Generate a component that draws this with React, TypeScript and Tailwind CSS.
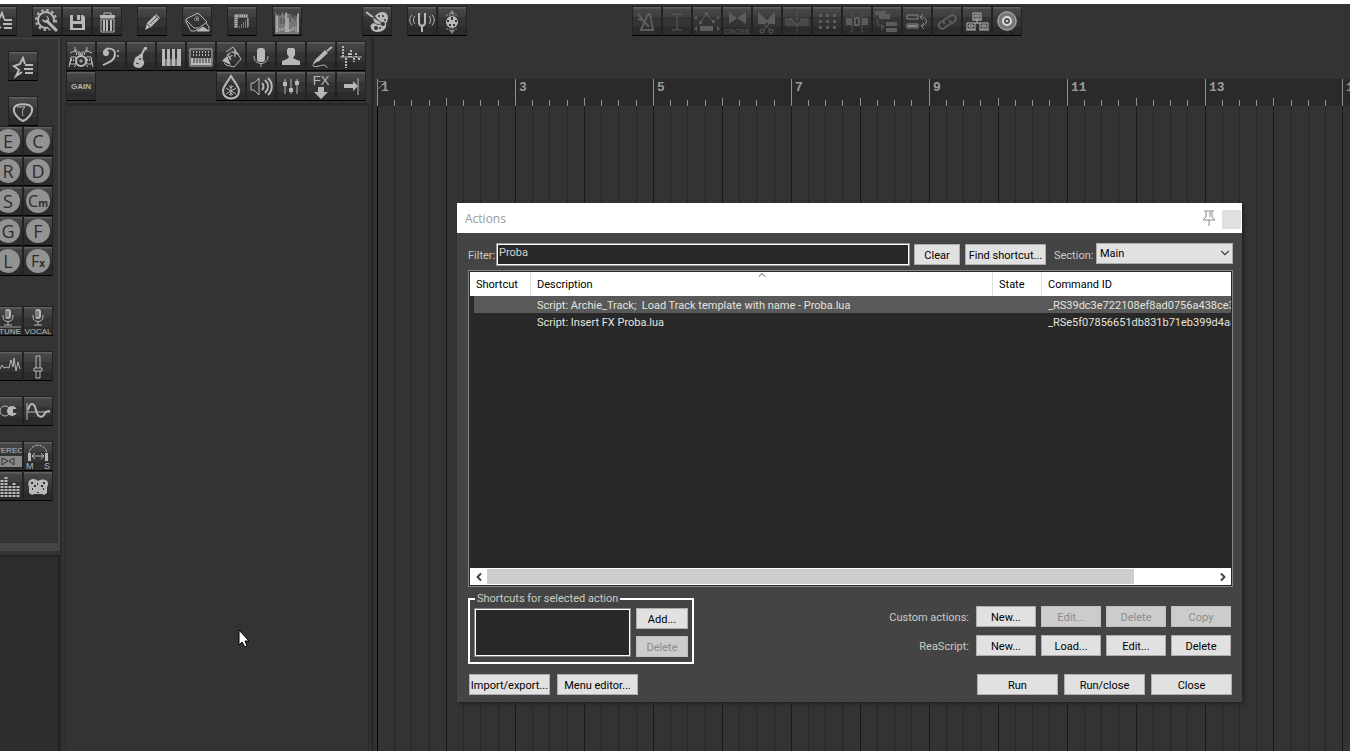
import { ReactNode, useEffect, useState } from 'react';
import { ChevronDown, ChevronLeft, ChevronRight, ChevronUp } from 'lucide-react';

const line = { fill: 'none', stroke: 'currentColor', strokeWidth: 2 };
const thin = { fill: 'none', stroke: 'currentColor', strokeWidth: 1 };

const Mic = () => (
  <g>
    <rect x="12" y="3" width="6" height="10" rx="3" fill="currentColor" />
    <path d="M12 6h4M12 8h4M12 10h4" stroke="#444" />
    <path d="M10 9v2c0 6 10 6 10 0V9M15 15v4M11 19h8" {...thin} />
  </g>
);

// All icons are drawn on the 30x30 toolbar tile
const ICONS: Record<string, ReactNode> = {
  starList: (
    <g {...line}>
      <path d="M17 13l-2-6-3 6-6 2 5 4-3 6 6-4M17 14h8M16 18h9M17 22h8" />
    </g>
  ),
  settings: (
    <g>
      <circle cx="14" cy="14" r="10" {...line} strokeDasharray="2.6 2.63" />
      <circle cx="14" cy="14" r="8" {...line} />
      <path d="M15 15l10 10" stroke="#333" strokeWidth="7" />
      <path d="M15 15l9 9" stroke="currentColor" strokeWidth="3" strokeLinecap="round" />
      <path d="M10 13c0 3 4 5 6 3s1-6-2-6l2 3-2 2z" fill="currentColor" />
    </g>
  ),
  save: (
    <path
      d="M8 9h3v6h8V9h2l2 2v13H8zM15 9h3v5h-3zM11 18v4h9v-4z"
      fill="currentColor"
      fillRule="evenodd"
    />
  ),
  trash: (
    <g>
      <path d="M12 9V7h7v2" {...thin} />
      <path d="M8 9h15v3H8z" fill="currentColor" />
      <path d="M9 13h13v13H9z" {...thin} />
      <path d="M12 14v11M15 14v11M19 14v11" {...line} />
    </g>
  ),
  pencil: (
    <g>
      <path d="M8 24l2-7L19 8l4 4-9 9z" fill="currentColor" />
      <path d="M10 18l3 3M13 18l7-7M18 9l4 4" stroke="#555" strokeWidth="1" />
    </g>
  ),
  book: (
    <g {...thin}>
      <path d="M4 13L16 7l9 9-12 9H9L4 16zM4 14l8 8h4" />
      <path d="M15 10v6M12 13h6M13 11l4 4M17 11l-4 4" strokeDasharray="1 1" />
      <path d="M15 25l6-4 6 4z" fill="currentColor" />
      <path d="M24 17l3 4v4" />
    </g>
  ),
  ruler: (
    <g>
      <path d="M9 22V10h12" {...line} strokeWidth="3" />
      <path d="M9 11v12M10 10h12" stroke="#333" strokeDasharray="1 1" />
      <path d="M12 21h10M14 19h8M16 17h6M18 15h4M20 13h2" stroke="currentColor" strokeDasharray="1 1" />
      <path d="M21 12v9" stroke="currentColor" />
    </g>
  ),
  texture: (
    <g>
      <path d="M3 28V5l2 4 2-1 1 3 2-5 3 4 1-5 2 3h3l2 5 1-4 3 2 2-6v23z" fill="#777" />
      <path d="M5 10v16M14 7v19M16 12v14M26 8v18" stroke="#a5a5a5" strokeWidth="2" />
      <path d="M9 12v6M18 9v7M12 12v6M23 10v5" stroke="#4a4a4a" />
      <path d="M4 21l5 3 4-3 5 4 4-4 5 3M4 26l6-3 5 3 6-3 6 3" {...thin} strokeDasharray="2 1" />
    </g>
  ),
  palette: (
    <g>
      <path d="M13 10c5-6 13-5 13 2 0 3-2 4-2 6 2 6-9 11-14 6-3-4-1-7 3-7 6 0 2-4 0-7z" fill="currentColor" />
      <g fill="#333">
        <circle cx="17" cy="10" r="1" />
        <circle cx="21" cy="10" r="1" />
        <circle cx="23" cy="14" r="1" />
        <circle cx="21" cy="18" r="2" />
        <circle cx="18" cy="22" r="1" />
        <circle cx="14" cy="22" r="2" />
      </g>
      <path d="M4 6l8 6" {...line} />
      <path d="M11 11l9 6c-3 3-8 1-9-3z" fill="currentColor" stroke="#444" />
    </g>
  ),
  tuning: (
    <g {...line}>
      <path d="M12 7v9c0 5 6 5 6 0V7M15 20v6" />
      <path d="M8 10c-2 2-2 6 0 8M22 10c2 2 2 6 0 8M5 9c-3 3-3 7 0 10M25 9c3 3 3 7 0 10" strokeWidth="1" />
    </g>
  ),
  paletteMove: (
    <g>
      <path d="M15 4l3 4h-6zM15 28l3-4h-6z" fill="#888" />
      <path d="M9 9h12M9 23h12" stroke="#a08888" strokeDasharray="2 1" />
      <circle cx="15" cy="16" r="6" fill="currentColor" />
      <path d="M14 11h2v3h-2zM10 14h2v2h-2zM18 14h2v2h-2zM12 18h2v2h-2zM16 18h2v2h-2z" fill="#333" />
    </g>
  ),
  metronome: (
    <g {...line}>
      <path d="M8 24h13L18 8h-2L9 24M6 8l11 13M6 13l4 1" />
    </g>
  ),
  ibeam: (
    <path d="M10 8h4l1 1 1-1h4M15 9v14M10 24h4l1-1 1 1h4" {...thin} />
  ),
  envelope: (
    <g>
      <path d="M8 17l6-9 8 9" {...thin} />
      <path d="M7 15h3v3H7zM13 6h3v3h-3zM20 14h3v3h-3zM8 20h13v5H8zM5 9v5l-3-2zM25 9v5l3-2zM5 20v5l-3-2zM25 20v5l3-2z" fill="currentColor" />
    </g>
  ),
  cross: (
    <g>
      <path d="M7 6l8 6 9-6v12l-9-6-8 6z" fill="currentColor" />
      <text x="15" y="28" textAnchor="middle" fontSize="7" fill="currentColor">CROSS</text>
    </g>
  ),
  cut: (
    <g>
      <path d="M6 6l9 8 8-8v12h-7l-1-2-2 2H6z" fill="currentColor" />
      <path d="M10 16l8 8M19 16l-8 8" {...thin} />
      <circle cx="10" cy="25" r="2" {...thin} />
      <circle cx="19" cy="25" r="2" {...thin} />
    </g>
  ),
  split: (
    <g>
      <path d="M3 13h6l6 6 6-6h6v7H3z" fill="currentColor" opacity="0.5" />
      <path d="M8 12l7 7 7-7" {...thin} />
      <path d="M15 5v22M3 13h24" {...thin} strokeDasharray="2 1" />
    </g>
  ),
  dots: (
    <path
      d="M7 8h3v3H7zM14 8h3v3h-3zM21 8h3v3h-3zM7 14h3v3H7zM14 14h3v3h-3zM21 14h3v3h-3zM7 20h3v3H7zM14 20h3v3h-3zM21 20h3v3h-3z"
      fill="currentColor"
    />
  ),
  snap: (
    <g>
      <path d="M4 12h6v7H4zM20 12h6v7h-6z" fill="currentColor" />
      <path d="M13 12h4v7h-4z" {...line} />
      <path d="M10 6v20M20 6v20" {...thin} strokeDasharray="2 1" />
    </g>
  ),
  cascade: (
    <g>
      <path d="M3 5h11v4H3zM7 8h11v5H7zM14 16h11v4H14zM14 22h11v4H14z" fill="currentColor" />
      <path d="M5 13c0 5 2 8 6 8M9 18l3 3-3 3" {...thin} />
    </g>
  ),
  swap: (
    <g className="text-[#888]">
      <path d="M5 9h11v4H5zM5 18h11v4H5z" {...thin} />
      <path d="M6 19h9v2H6z" fill="currentColor" />
      <path d="M18 11c7-1 9 7 2 9M21 8l-3 3 3 3M22 17l-3 3 3 3" {...thin} />
    </g>
  ),
  link: (
    <path d="M13 18c-3-2-1-5 2-6l5-3c4 0 5 5 2 7l-3 2M17 14c3 2 1 5-2 6l-4 3c-4 0-6-5-2-7l3-2" {...line} />
  ),
  tree: (
    <g {...thin}>
      <path d="M11 7h8v6h-8zM5 17h8v6H5zM18 17h8v6h-8zM15 13v4h-2M15 17h3" />
      <path d="M13 9h4v2h-4zM7 19h4v2H7zM20 19h4v2h-4zM4 24h10M17 24h10M10 14h10" />
    </g>
  ),
  record: (
    <g shapeRendering="auto">
      <circle cx="15" cy="15" r="10" fill="#777" />
      <circle cx="15" cy="15" r="9" {...thin} stroke="#aaa" />
      <circle cx="15" cy="15" r="4" fill="#555" stroke="#ddd" strokeWidth="2" />
      <circle cx="15" cy="15" r="1" fill="#eee" />
      <path d="M9 27h3M19 27h3" stroke="#222" strokeWidth="2" />
    </g>
  ),
  drums: (
    <g {...thin}>
      <circle cx="15" cy="20" r="5" strokeWidth="2" />
      <path d="M15 18v4M13 20h4M5 16h5v7H4zM20 16h5l1 7h-5z" />
      <path d="M4 12l7-3M19 9l7 3M9 6v5M21 6v5M9 11h5v4M21 11h-5v4M3 26l2-9M27 26l-2-9M8 26l2-2M22 26l-2-2" />
      <path d="M5 19h4M21 19h4M10 13h10" strokeWidth="2" strokeDasharray="1 1" />
    </g>
  ),
  bass: (
    <g>
      <path d="M8 12c0-6 11-6 11 1 0 6-5 8-12 11" {...line} />
      <circle cx="10" cy="12" r="3" fill="currentColor" />
      <circle cx="22" cy="10" r="1" fill="currentColor" />
      <circle cx="22" cy="15" r="1" fill="currentColor" />
    </g>
  ),
  guitar: (
    <g>
      <path d="M9 17c1-2 3-1 4-3s4-1 4 1-1 3 0 4c3 2 0 8-4 8s-7-3-5-6z" fill="currentColor" />
      <path d="M14 17l5-10" {...line} />
      <path d="M18 6h3v3h-2z" fill="currentColor" />
      <circle cx="14" cy="18" r="1" fill="#333" />
      <path d="M10 22l3 1" stroke="#333" />
    </g>
  ),
  piano: (
    <g>
      <path d="M6 8h19v17H6z" fill="currentColor" />
      <path d="M10 8v10M15 8v10M20 8v10" stroke="#333" strokeWidth="2" />
      <path d="M10 18v7M15 18v7M20 18v7" stroke="#333" />
    </g>
  ),
  organ: (
    <g>
      <path d="M4 8h22v17H4z" {...thin} />
      <path d="M7 11h16M7 14h16" stroke="currentColor" strokeWidth="2" strokeDasharray="1 2" />
      <path d="M5 17h20v7H5z" fill="currentColor" />
      <path d="M8 17v5M11 17v5M14 17v5M17 17v5M20 17v5M23 17v5" stroke="#333" />
    </g>
  ),
  fxCard: (
    <g>
      <path d="M10 11l7-5 8 12-7 8-8-2-2-2" {...thin} />
      <path d="M6 20l5-5 4 9z" fill="currentColor" />
      <text x="12" y="18" fontSize="9" fontWeight="bold" transform="rotate(-35 15 16)" fill="currentColor">FX</text>
    </g>
  ),
  mic: (
    <g shapeRendering="auto">
      <rect x="11" y="7" width="8" height="14" rx="3" fill="currentColor" />
      <path d="M8 15c0 10 14 10 14 0M15 22v4" {...thin} />
    </g>
  ),
  person: (
    <path d="M12 7h6l1 2v5l-2 3 4 2 3 1v4H6v-4l5-2 2-2-2-3V9z" fill="currentColor" />
  ),
  jack: (
    <g>
      <path d="M9 19L19 9l3 3-10 9z" fill="currentColor" />
      <path d="M21 10l5-4M11 19l-3 3" {...line} />
      <path d="M8 22c-3 4 1 4 5 3s7-2 8 2" {...thin} />
    </g>
  ),
  wave: (
    <g {...thin}>
      <path d="M4 16h22" />
      <path d="M7 5v11M10 17v10M13 12v4M15 9v7M18 17v4M20 12v4M23 17v2" strokeWidth="2" strokeDasharray="2 1" />
    </g>
  ),
  gain: (
    <text x="15" y="18" textAnchor="middle" fontSize="8" fontWeight="bold" fill="currentColor">GAIN</text>
  ),
  drop: (
    <g>
      <path d="M15 5c-4 7-8 10-8 15 0 10 16 10 16 0 0-5-4-8-8-15z" {...line} />
      <path d="M15 14v11M10 17l10 6M20 17l-10 6M13 15l2 2 2-2M13 24l2-2 2 2" {...thin} />
    </g>
  ),
  speaker: (
    <g {...line}>
      <path d="M5 12h3l5-5v17l-5-5H5z" strokeWidth="1" />
      <path d="M16 12c2 2 2 5 0 7M19 9c4 4 4 9 0 13M22 7c5 5 5 12 0 17" />
    </g>
  ),
  sliders: (
    <g>
      <path d="M9 8v15M15 8v15M21 8v15" {...thin} />
      <path d="M7 11h4v4H7zM13 17h4v4h-4zM19 10h4v4h-4z" fill="currentColor" />
    </g>
  ),
  fxDown: (
    <g fill="currentColor">
      <text x="15" y="14" textAnchor="middle" fontSize="13">FX</text>
      <path d="M12 16h6v5h4l-7 7-7-7h4z" />
    </g>
  ),
  arrowEnd: (
    <g>
      <path d="M8 13h9v-3l5 5-5 5v-3H8z" fill="currentColor" />
      <path d="M22 7v17" {...thin} />
    </g>
  ),
  pick: (
    <g {...line}>
      <path d="M6 12c2-5 16-5 18 0 1 5-4 11-9 13-5-2-10-8-9-13z" />
      <path d="M9 11h8c-3 3-3 5-2 9" strokeWidth="1" />
    </g>
  ),
  tune: (
    <g>
      <Mic />
      <path d="M3 21h25" stroke="#999" />
      <text x="17" y="28" textAnchor="middle" fontSize="8" fontWeight="bold" fill="#999">TUNE</text>
    </g>
  ),
  vocal: (
    <g>
      <Mic />
      <text x="15" y="28" textAnchor="middle" fontSize="8" fill="currentColor">VOCAL</text>
    </g>
  ),
  signal: (
    <path d="M3 20l4-2 2-4 2 3 3-1 2 1 2-8 2 7 1-9 2 13 2-9 2 7" {...thin} />
  ),
  fader: (
    <g {...thin}>
      <path d="M13 5h4v22h-4z" />
      <path d="M11 17h8v3h-8z" fill="#333" />
    </g>
  ),
  circles: (
    <g shapeRendering="auto">
      <circle cx="12" cy="15" r="5" {...thin} />
      <circle cx="19" cy="15" r="5" fill="currentColor" />
      <path d="M24 13h-4v4h4z" fill="#333" />
    </g>
  ),
  sine: (
    <g {...thin}>
      <path d="M4 7v17M4 16h23" />
      <path d="M5 14c2-8 6-8 8 0 2 9 7 8 9 3 1-2 3-2 5-2" {...line} />
    </g>
  ),
  stereo: (
    <g>
      <text x="14" y="12" textAnchor="middle" fontSize="8" fill="currentColor">STEREO</text>
      <path d="M3 15h26v11H3z" fill="#888" />
      <path d="M9 17v7l6-4zM21 17v7l-5-4z" fill="none" stroke="#333" />
    </g>
  ),
  headphones: (
    <g>
      <path d="M6 14c0-13 18-13 18 0" {...thin} strokeDasharray="3 1" />
      <path d="M5 12h3v8H5zM22 12h3v8h-3z" fill="currentColor" />
      <path d="M10 15h10M12 12l-3 3 3 3M18 12l3 3-3 3" {...thin} />
      <text x="3" y="28" fontSize="9" fill="currentColor">M</text>
      <text x="21" y="28" fontSize="9" fill="currentColor">S</text>
    </g>
  ),
  eq: (
    <path d="M9 26V8M13 26V5M17 26V14M21 26V11M25 26V14" stroke="currentColor" strokeWidth="3" strokeDasharray="2 1" />
  ),
  pads: (
    <g>
      <path d="M6 10c3-3 7-2 9 0 3-2 7-2 9 0 2 2 1 5 0 6v6l-3 2-2-1h-8l-2 1-3-2v-6c-1-2-1-4 0-6z" fill="currentColor" />
      <path d="M8 11h2v2H8zM11 14h2v2h-2zM18 14h2v2h-2zM20 11h2v2h-2zM14 12h1v2h-1zM9 17h1v2H9zM20 17h1v2h-1zM14 21h2v1h-2z" fill="#333" />
    </g>
  ),
};

function Tile({ icon, dim }: { icon: string; dim?: boolean }) {
  return (
    <button
      aria-label={icon}
      className={`size-[30px] shrink-0 border border-b-black border-t-[#222] border-x-[#222] bg-[linear-gradient(#606060_0,#606060_1px,#464646_2px,#3e3e3e_10px,#353535_10px,#333_20px,#2b2b2b_20px)] ${
        dim ? 'text-[#5c5c5c]' : 'text-[#b8b8b8]'
      }`}
    >
      <svg viewBox="1 1 28 28" className="size-7 font-['Liberation_Sans',sans-serif]">
        {ICONS[icon]}
      </svg>
    </button>
  );
}

function LetterTile({ letter, sub }: { letter: string; sub?: string }) {
  return (
    <button className="flex size-[30px] shrink-0 items-center justify-center border border-b-black border-t-[#222] border-x-[#222] bg-[linear-gradient(#606060_0,#606060_1px,#464646_2px,#3e3e3e_10px,#353535_10px,#2b2b2b_20px)]">
      <span
        className={`flex size-6 items-center justify-center rounded-full bg-[#939393] font-['Open_Sans',sans-serif] leading-6 font-medium text-[#2c2c2c] ${
          sub ? 'text-[16px]' : 'text-[18px]'
        }`}
      >
        {letter}
        {sub && <span className="mt-1 text-[10px] font-bold">{sub}</span>}
      </span>
    </button>
  );
}

function Group({ icons, className = '', dim }: { icons: string[]; className?: string; dim?: boolean }) {
  return (
    <div className={`flex ${className}`}>
      {icons.map((icon) => (
        <Tile key={icon} icon={icon} dim={dim} />
      ))}
    </div>
  );
}

function MainToolbar() {
  return (
    <header className="-ml-[13px] flex h-[34px] shrink-0 gap-[15px] pt-0.5">
      <Group icons={['starList']} />
      <Group icons={['settings', 'save', 'trash']} />
      <Group icons={['pencil']} />
      <Group icons={['book']} />
      <Group icons={['ruler']} />
      <Group icons={['texture']} />
      <Group icons={['palette']} className="ml-[45px]" />
      <Group icons={['tuning', 'paletteMove']} />
      <div className="ml-[150px] flex">
        <Group
          dim
          icons={['metronome', 'ibeam', 'envelope', 'cross', 'cut', 'split', 'dots', 'snap', 'cascade', 'swap', 'link']}
        />
        <Group icons={['tree', 'record']} />
      </div>
    </header>
  );
}

function Sidebar() {
  return (
    <aside className="flex w-[61px] shrink-0 flex-col overflow-hidden border-r border-[#262626]">
      <div className="flex h-[513px] shrink-0 flex-col border-t border-r-2 border-b-8 border-[#454545] pt-3">
        <div className="ml-2 flex flex-col gap-[15px]">
          <Tile icon="starList" />
          <Tile icon="pick" />
        </div>
        <div className="-ml-[7px] grid w-[60px] grid-cols-2">
          <LetterTile letter="E" />
          <LetterTile letter="C" />
          <LetterTile letter="R" />
          <LetterTile letter="D" />
          <LetterTile letter="S" />
          <LetterTile letter="C" sub="m" />
          <LetterTile letter="G" />
          <LetterTile letter="F" />
          <LetterTile letter="L" />
          <LetterTile letter="F" sub="x" />
        </div>
        <div className="mt-[30px] -ml-[7px] flex flex-col gap-[15px]">
          <Group icons={['tune', 'vocal']} />
          <Group icons={['signal', 'fader']} />
          <Group icons={['circles', 'sine']} />
          <div>
            <Group icons={['stereo', 'headphones']} />
            <Group icons={['eq', 'pads']} />
          </div>
        </div>
      </div>
      <div className="mt-1 flex-1 border-t-2 border-r-2 border-[#222] bg-[#2d2d2d]" />
    </aside>
  );
}

function TrackPanel() {
  return (
    <section className="flex w-[313px] shrink-0 flex-col border-r-[3px] border-[#292929] pt-[3px]">
      <div className="ml-[5px]">
        <Group icons={['drums', 'bass', 'guitar', 'piano', 'organ', 'fxCard', 'mic', 'person', 'jack', 'wave']} />
        <div className="flex">
          <Group icons={['gain']} />
          <Group icons={['drop', 'speaker', 'sliders', 'fxDown', 'arrowEnd']} className="ml-[120px]" />
        </div>
      </div>
      <div className="mt-0.5 mr-0.5 ml-1 flex-1 border-t-[3px] border-r border-l border-[#292929] bg-[#333]" />
    </section>
  );
}

const BEAT = 17.24;
const ARRANGE_LEFT = 377;

function Arrange() {
  const [width, setWidth] = useState(window.innerWidth - ARRANGE_LEFT);

  useEffect(() => {
    const onResize = () => setWidth(window.innerWidth - ARRANGE_LEFT);
    window.addEventListener('resize', onResize);
    return () => window.removeEventListener('resize', onResize);
  }, []);

  const beats = Array.from({ length: Math.ceil(width / BEAT) }, (_, i) => ({ i, x: Math.round(i * BEAT) }));

  return (
    <main className="ml-[3px] flex min-w-0 flex-1 flex-col pt-[41px]">
      <div className="relative h-[27px] shrink-0 overflow-hidden bg-[#2a2a2a]">
        <svg className="h-full w-full" shapeRendering="crispEdges">
          {beats.map(({ i, x }) => (
            <rect
              key={i}
              x={x}
              y={i % 8 === 0 ? 0 : i % 4 === 0 ? 19 : 21}
              width="1"
              height="27"
              fill="#8f8f8f"
            />
          ))}
          <path d="M0 2h9M0 11l8-8M8 2v10" fill="none" stroke="#777" />
        </svg>
        {beats
          .filter(({ i }) => i % 8 === 0)
          .map(({ i, x }) => (
            <span
              key={i}
              className="absolute top-0 ml-1 font-['Liberation_Mono',monospace] text-[13px] leading-[18px] font-bold text-[#9a9a9a]"
              style={{ left: x }}
            >
              {i / 4 + 1}
            </span>
          ))}
      </div>
      <svg className="min-h-0 w-full flex-1" shapeRendering="crispEdges">
        {beats.map(({ i, x }) => (
          <line
            key={i}
            x1={x + 0.5}
            x2={x + 0.5}
            y1="0"
            y2="3000"
            stroke={i % 4 === 0 ? '#000' : '#1c1c1c'}
            strokeDasharray={i === 0 ? undefined : '1 1'}
          />
        ))}
      </svg>
    </main>
  );
}

function Btn({ children, className = 'w-[60px]', disabled }: { children: ReactNode; className?: string; disabled?: boolean }) {
  return (
    <button
      disabled={disabled}
      className={`h-[21px] shrink-0 border border-[#adadad] bg-[#e1e1e1] pt-px whitespace-nowrap text-black disabled:border-[#bfbfbf] disabled:bg-[#ccc] disabled:text-[#8c8c8c] ${className}`}
    >
      {children}
    </button>
  );
}

const ACTIONS = [
  { description: 'Script: Archie_Track;  Load Track template with name - Proba.lua', id: '_RS39dc3e722108ef8ad0756a438ce3' },
  { description: 'Script: Insert FX Proba.lua', id: '_RSe5f07856651db831b71eb399d4aa' },
];

function ActionList() {
  return (
    <div className="mt-1 flex h-[317px] flex-col border border-[#828790] bg-[#292929] p-px">
      <div className="relative min-h-0 flex-1 overflow-hidden">
        <table className="w-full table-fixed border-separate border-spacing-0 text-left">
          <thead>
            <tr className="h-6 bg-white text-black">
              <th className="w-[61px] border-r border-[#e0e0e0] p-0 pl-1.5 font-normal">Shortcut</th>
              <th className="border-r border-[#e0e0e0] p-0 pl-1.5 font-normal">Description</th>
              <th className="w-[49px] border-r border-[#e0e0e0] p-0 pl-1.5 font-normal">State</th>
              <th className="w-[189px] p-0 pl-1.5 font-normal">Command ID</th>
            </tr>
          </thead>
          <tbody className="text-[#e4e4dc]">
            {ACTIONS.map((action, i) => (
              <tr key={action.id} className={`h-[17px] ${i === 0 ? 'bg-[#595959]' : ''}`}>
                <td className="border-l-4 border-[#292929] p-0" />
                <td className="overflow-hidden p-0 pt-px pl-1.5 whitespace-pre">{action.description}</td>
                <td className="p-0" />
                <td className="overflow-hidden p-0 pt-px pl-1.5 whitespace-nowrap">{action.id}</td>
              </tr>
            ))}
          </tbody>
        </table>
        <ChevronUp className="absolute top-[-3px] left-[286px] size-3 text-[#555]" strokeWidth={2} />
      </div>
      <div className="flex h-[17px] shrink-0 items-center bg-white text-[#444]">
        <button aria-label="Scroll left" className="flex w-[17px] justify-center">
          <ChevronLeft className="size-3" strokeWidth={4} />
        </button>
        <div className="flex-1">
          <div className="h-[15px] w-[89%] bg-[#cdcdcd]" />
        </div>
        <button aria-label="Scroll right" className="flex w-[17px] justify-center">
          <ChevronRight className="size-3" strokeWidth={4} />
        </button>
      </div>
    </div>
  );
}

function ActionsDialog() {
  const [filter, setFilter] = useState('Proba');

  return (
    <div
      role="dialog"
      aria-labelledby="actions-title"
      className="absolute top-[203px] left-[457px] w-[785px] bg-[#444] font-[Roboto,'Liberation_Sans',sans-serif] text-[11px] leading-[13px] text-[#ccccc4] shadow-[2px_2px_3px_#222]"
    >
      <div className="flex h-[30px] items-center bg-white pl-2">
        <h1 id="actions-title" className="flex-1 font-['Open_Sans',sans-serif] text-[12px] text-[#999]">
          Actions
        </h1>
        <button aria-label="Pin" className="mr-1.5">
          <svg viewBox="0 0 14 16" className="h-4 w-3.5" fill="none" stroke="#888">
            <path d="M2 1h10M4 1v6l-3 3h12l-3-3V1M8 2v5M7 10v6" />
          </svg>
        </button>
        <button aria-label="Close window" className="mt-0.5 mr-px size-[19px] bg-[#e0e0e0]" />
      </div>

      <div className="pt-2.5 pr-[9px] pb-[7px] pl-[11px]">
        <div className="flex h-[23px] items-center">
          <label htmlFor="filter" className="w-[28px] shrink-0 pt-px whitespace-nowrap">
            Filter:
          </label>
          <input
            id="filter"
            value={filter}
            onChange={(e) => setFilter(e.target.value)}
            className="h-[23px] min-w-0 flex-1 border border-[#999] bg-[#292929] pb-1 pl-0.5 text-[#d4d4cc] ring-1 ring-white outline-none ring-inset"
          />
          <Btn className="ml-1 w-[46px]">Clear</Btn>
          <Btn className="ml-[5px] w-[81px]">Find shortcut...</Btn>
          <label htmlFor="section" className="ml-2 w-[42px] shrink-0 pt-px">
            Section:
          </label>
          <div className="relative mb-0.5">
            <select
              id="section"
              className="block h-[21px] w-[137px] appearance-none border border-[#adadad] bg-[#e1e1e1] pl-[3px] text-black"
            >
              <option>Main</option>
            </select>
            <ChevronDown className="pointer-events-none absolute top-[3px] right-px size-3.5" color="#444" />
          </div>
        </div>

        <ActionList />

        <div className="mt-1.5 flex items-start justify-between">
          <fieldset className="flex h-[71px] w-[226px] gap-[5px] border-2 border-white px-1 pt-1">
            <legend className="ml-px px-0.5 leading-[11px]">Shortcuts for selected action</legend>
            <div className="h-[49px] w-[157px] border border-[#828790] bg-[#292929] ring-1 ring-white ring-inset" />
            <div className="flex flex-col gap-[7px]">
              <Btn className="w-[52px]">Add...</Btn>
              <Btn className="w-[52px]" disabled>
                Delete
              </Btn>
            </div>
          </fieldset>
          <div className="mt-[13px] mr-0.5 grid grid-cols-[auto_60px_60px_60px_60px] items-center gap-x-[5px] gap-y-2">
            <span className="mr-0.5 pt-0.5 text-right">Custom actions:</span>
            <Btn>New...</Btn>
            <Btn disabled>Edit...</Btn>
            <Btn disabled>Delete</Btn>
            <Btn disabled>Copy</Btn>
            <span className="mr-0.5 pt-0.5 text-right">ReaScript:</span>
            <Btn>New...</Btn>
            <Btn>Load...</Btn>
            <Btn>Edit...</Btn>
            <Btn>Delete</Btn>
          </div>
        </div>

        <div className="mt-2.5 mr-px ml-px flex gap-1.5">
          <Btn className="w-[81px]">Import/export...</Btn>
          <Btn className="ml-px w-[81px]">Menu editor...</Btn>
          <Btn className="ml-auto w-[81px]">Run</Btn>
          <Btn className="w-[81px]">Run/close</Btn>
          <Btn className="w-[81px]">Close</Btn>
        </div>
      </div>
    </div>
  );
}

export default function App() {
  return (
    <div className="relative flex h-screen flex-col overflow-hidden bg-[#333]">
      <div className="h-1 shrink-0 bg-white" />
      <MainToolbar />
      <div className="flex min-h-0 flex-1">
        <Sidebar />
        <TrackPanel />
        <Arrange />
      </div>
      <ActionsDialog />
      {/* Mouse pointer */}
      <svg viewBox="0 0 12 19" className="absolute top-[629px] left-[238px] h-[19px] w-3">
        <path d="M1 1v15l3-3 3 5 2-1-2-5h4z" fill="#fff" stroke="#000" />
      </svg>
    </div>
  );
}
